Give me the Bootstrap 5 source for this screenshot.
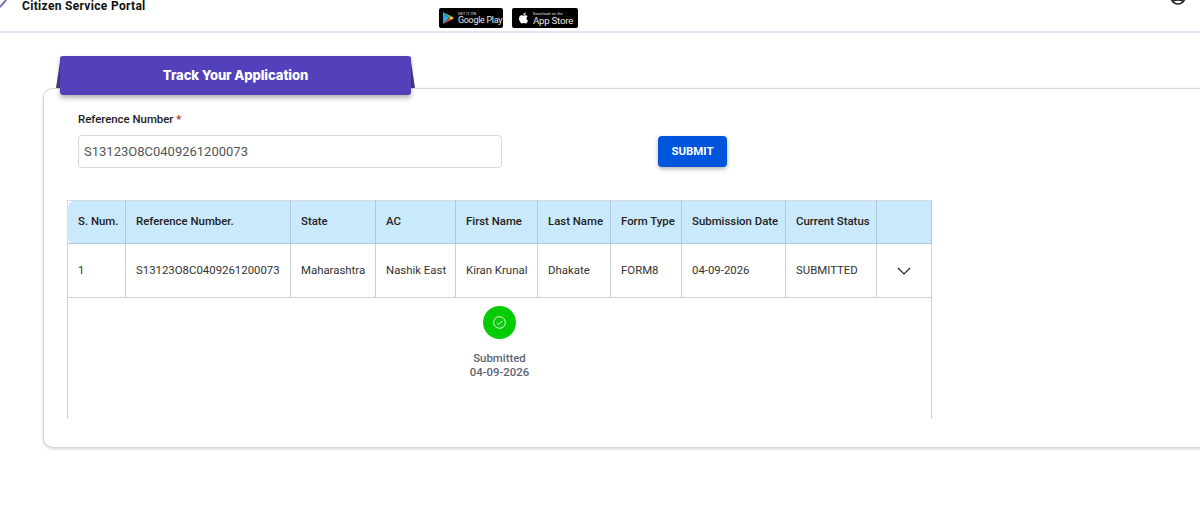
<!DOCTYPE html>
<html lang="en">
<head>
    <meta charset="UTF-8">
    <meta name="viewport" content="width=device-width, initial-scale=1.0">
    <title>Track Your Application</title>
    <link href="https://cdn.jsdelivr.net/npm/bootstrap@5.3.0/dist/css/bootstrap.min.css" rel="stylesheet">
    <style>
        html, body { height: 530px; overflow: hidden; }
        body { font-family: Roboto, "Liberation Sans", sans-serif; background: #fff; color: #212529; position: relative; }
        .top-bar { height: 33px; border-bottom: 2px solid #e5e3f3; padding-left: 22px; overflow: hidden; }
        .logo-bit { position: absolute; left: 0; top: 0; }
        .portal-name { font-size: 12px; font-weight: 700; letter-spacing: .32px; color: #111; line-height: 12px; width: 417px; flex: none; }
        .store-row { gap: 9px; padding-top: 8px; }
        .store-badge { height: 20px; background: #000; border-radius: 2px; color: #e8e8e8; gap: 4px; padding: 0 2px 0 4px; }
        .store-badge svg { flex: none; }
        .badge-play { width: 64px; }
        .badge-apple { width: 66px; padding-left: 6px; gap: 4px; }
        .badge-small { font-size: 3.6px; line-height: 4px; letter-spacing: .2px; white-space: nowrap; }
        .badge-big { font-size: 8.9px; line-height: 9px; letter-spacing: -.25px; white-space: nowrap; }
        .badge-apple .badge-big { font-size: 9.7px; }
        .user-icon { margin-left: auto; margin-right: 14px; margin-top: -11px; }
        .track-area { padding: 23px 0 0 43px; position: relative; }
        .track-tab { position: relative; margin-left: 17px; width: 351px; height: 39px; background: #5340bb; border-radius: 3px; color: #fff; font-family: Inter, Lato, sans-serif; font-weight: 800; font-size: 13.1px; letter-spacing: -.1px; z-index: 2; box-shadow: 0 3px 5px rgba(0,0,0,.3); }
        .tab-ear { position: absolute; top: 22px; width: 5px; height: 33px; background: #45407f; z-index: 1; }
        .ear-left { left: 56px; clip-path: polygon(100% 0, 0 100%, 100% 100%); }
        .ear-right { left: 410px; clip-path: polygon(0 0, 100% 100%, 0 100%); }
        .track-panel { margin-top: -7px; width: 1180px; height: 360px; background: #fff; border: 1px solid #d6d6d6; border-radius: 10px; box-shadow: 0 1px 3px rgba(0,0,0,.18); padding: 22px 0 0 23px; }
        .ref-label { font-size: 11.4px; font-weight: 500; color: #222; margin-bottom: 8px; line-height: 15px; padding-left: 11px; padding-top: 1px; }
        .ref-label span { color: #b3261e; }
        .ref-input { width: 424px; height: 33px; margin-left: 11px; font-size: 13px; color: #555; border-color: #d8d8d8; border-radius: 4px; padding: 4px 5px; }
        .ref-input:focus { border-color: #d8d8d8; box-shadow: none; }
        .submit-btn { margin-left: 156px; width: 69px; height: 31px; background: #0055dd; color: #fff; border: 0; border-radius: 4px; font-size: 11.4px; font-weight: 700; box-shadow: 0 2px 4px rgba(0,0,0,.3); padding: 0; }
        .submit-btn:hover { background: #0055dd; color: #fff; }
        .track-table { table-layout: fixed; width: 864px; margin: 32px 0 0 0; font-size: 11.4px; border-collapse: collapse; }
        .track-table th { background: #cbe9fd; height: 43px; font-weight: 500; color: #222; border: 1px solid #aec9da; padding: 0 10px; vertical-align: middle; white-space: nowrap; }
        .track-table thead th { border-top-color: #d5dde2; }
        .track-table th:first-child { border-radius: 6px 0 0 6px; border-left-color: #d5dde2; }
        .track-table td { height: 54px; color: #333; border: 1px solid #cfcfcf; padding: 0 10px; vertical-align: middle; white-space: nowrap; }
        .track-table td.detail-cell { height: 121px; border-bottom: 0; padding: 8px 0 0; vertical-align: top; text-align: center; }
        .status-dot { width: 33px; height: 33px; background: #04cc04; border-radius: 50%; }
        .status-text { font-size: 11.4px; line-height: 14px; font-weight: 500; color: #5d6472; margin-top: 12px; }
    </style>
</head>
<body>
    <svg class="logo-bit" width="9" height="9" viewBox="0 0 9 9"><path d="M0 7 L6 0" stroke="#7a6fb8" stroke-width="2" fill="none"/></svg>
    <header class="top-bar d-flex align-items-start">
        <div class="portal-name">Citizen Service Portal</div>
        <div class="store-row d-flex">
            <div class="store-badge badge-play d-flex align-items-center">
                <svg width="11" height="12" viewBox="0 0 11 12"><path d="M0 0 L6 6 L0 12Z" fill="#2aa6e8"/><path d="M0 0 L8 4 L6 6Z" fill="#3fbf6a"/><path d="M0 12 L8 8 L6 6Z" fill="#e8443a"/><path d="M8 4 L11 6 L8 8 L6 6Z" fill="#fbc02d"/></svg>
                <div>
                    <div class="badge-small">GET IT ON</div>
                    <div class="badge-big">Google Play</div>
                </div>
            </div>
            <div class="store-badge badge-apple d-flex align-items-center">
                <svg width="11" height="12" viewBox="0 0 16 16" fill="#fff"><path d="M11.182.008C11.148-.03 9.923.023 8.857 1.18c-1.066 1.156-.902 2.482-.878 2.516.024.034 1.52.087 2.475-1.258.955-1.345.762-2.391.728-2.43Zm3.314 11.733c-.048-.096-2.325-1.234-2.113-3.422.212-2.189 1.675-2.789 1.698-2.854.023-.065-.597-.79-1.254-1.157a3.692 3.692 0 0 0-1.563-.434c-.108-.003-.483-.095-1.254.116-.508.139-1.653.589-1.968.607-.316.018-1.256-.522-2.267-.665-.647-.125-1.333.131-1.824.328-.49.196-1.422.754-2.074 2.237-.652 1.482-.311 3.83-.067 4.56.244.729.625 1.924 1.273 2.796.576.984 1.34 1.667 1.659 1.899.319.232 1.219.386 1.843.067.502-.308 1.408-.485 1.766-.472.357.013 1.061.154 1.782.539.571.197 1.111.115 1.652-.105.541-.221 1.324-1.059 2.238-2.758.347-.79.505-1.217.473-1.282Z"/></svg>
                <div>
                    <div class="badge-small">Download on the</div>
                    <div class="badge-big">App Store</div>
                </div>
            </div>
        </div>
        <svg class="user-icon" width="16" height="16" viewBox="0 0 16 16" fill="none" stroke="#222" stroke-width="1.6"><circle cx="8" cy="8" r="7"/><path d="M3 12.5c1.500-2 8.500-2 10 0"/></svg>
    </header>

    <main class="track-area">
        <span class="tab-ear ear-left"></span>
        <span class="tab-ear ear-right"></span>
        <div class="track-tab d-flex align-items-center justify-content-center">Track Your Application</div>
        <div class="track-panel">
            <label class="ref-label d-block" for="refNo">Reference Number <span>*</span></label>
            <div class="d-flex align-items-center">
                <input id="refNo" class="form-control ref-input" type="text" value="S13123O8C0409261200073">
                <button class="btn submit-btn" type="button">SUBMIT</button>
            </div>
            <table class="track-table">
                <colgroup>
                    <col style="width:58px"><col style="width:165px"><col style="width:85px"><col style="width:80px"><col style="width:82px"><col style="width:73px"><col style="width:71px"><col style="width:104px"><col style="width:91px"><col style="width:55px">
                </colgroup>
                <thead>
                    <tr>
                        <th>S. Num.</th>
                        <th>Reference Number.</th>
                        <th>State</th>
                        <th>AC</th>
                        <th>First Name</th>
                        <th>Last Name</th>
                        <th>Form Type</th>
                        <th>Submission Date</th>
                        <th>Current Status</th>
                        <th></th>
                    </tr>
                </thead>
                <tbody>
                    <tr>
                        <td>1</td>
                        <td>S13123O8C0409261200073</td>
                        <td>Maharashtra</td>
                        <td>Nashik East</td>
                        <td>Kiran Krunal</td>
                        <td>Dhakate</td>
                        <td>FORM8</td>
                        <td>04-09-2026</td>
                        <td>SUBMITTED</td>
                        <td class="text-center">
                            <svg width="14" height="8" viewBox="0 0 14 8" fill="none" stroke="#222" stroke-width="1.2"><path d="M1 1l6 6 6-6"/></svg>
                        </td>
                    </tr>
                    <tr>
                        <td class="detail-cell" colspan="10">
                            <div class="d-flex flex-column align-items-center">
                                <div class="status-dot d-flex align-items-center justify-content-center">
                                    <svg width="13" height="13" viewBox="0 0 13 13" fill="none" stroke="#fff" stroke-width=".9"><circle cx="6.500" cy="6.500" r="5.800"/><path d="M3.800 6.700l2 1.900 3.500-3.800"/></svg>
                                </div>
                                <div class="status-text">Submitted<br>04-09-2026</div>
                            </div>
                        </td>
                    </tr>
                </tbody>
            </table>
        </div>
    </main>

    <script src="https://cdn.jsdelivr.net/npm/bootstrap@5.3.0/dist/js/bootstrap.bundle.min.js"></script>
</body>
</html>
